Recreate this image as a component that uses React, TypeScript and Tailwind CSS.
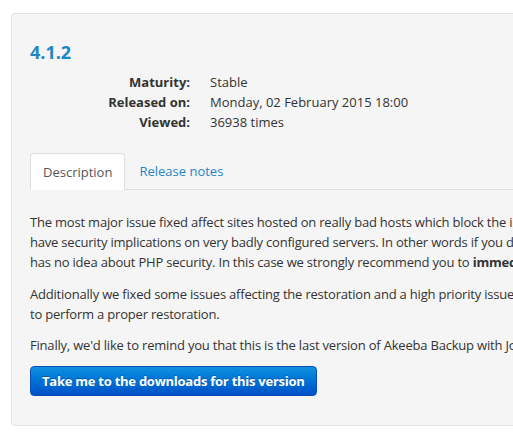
export default function App() {
  const font = { fontFamily: '"Open Sans", "Noto Sans", sans-serif' };
  return (
    <div className="w-[513px] h-[435px] overflow-hidden bg-white text-[#333] text-[13px] leading-[20px]" style={font}>
      <div className="ml-[11px] mt-[13px] w-[700px] h-[413px] bg-[#f5f5f5] border border-[#e3e3e3] rounded-[4px] pl-[18px] pt-[28px]">
        <h3 className="text-[18px] leading-[20px] font-bold text-[#1f86c8]">4.1.2</h3>
        <div className="mt-[10px] grid grid-cols-[160px_1fr] gap-x-[20px]">
          <div className="text-right font-bold">Maturity:</div>
          <div>Stable</div>
          <div className="text-right font-bold">Released on:</div>
          <div>Monday, 02 February 2015 18:00</div>
          <div className="text-right font-bold">Viewed:</div>
          <div>36938 times</div>
        </div>
        <div className="mt-[21px] flex border-b border-[#ddd] h-[37px]">
          <div className="px-3 py-2 bg-white border border-[#ddd] border-b-0 rounded-t-[4px] mr-[2px] h-[37px] text-[#555]">Description</div>
          <div className="px-3 py-2 text-[#1f86c8]">Release notes</div>
        </div>
        <div className="mt-[22px] whitespace-nowrap tracking-[-0.2px]">
          <p>The most major issue fixed affect sites hosted on really bad hosts which block the index.php file from running.</p>
          <p>have security implications on very badly configured servers. In other words if you don't know what this means</p>
          <p>has no idea about PHP security. In this case we strongly recommend you to <b>immediately</b> upgrade.</p>
          <p className="mt-[12px]">Additionally we fixed some issues affecting the restoration and a high priority issue which</p>
          <p>to perform a proper restoration.</p>
          <p className="mt-[11px]">Finally, we'd like to remind you that this is the last version of Akeeba Backup with Joomla! 2.5 support.</p>
        </div>
        <button className="mt-[11px] h-[30px] px-[11px] rounded-[4px] border border-[#0a4fb8] bg-gradient-to-b from-[#1290e0] to-[#0050c8] text-white font-bold text-[13px] tracking-[-0.25px] leading-[20px] [text-shadow:0_-1px_0_rgba(0,0,0,0.25)]">
          Take me to the downloads for this version
        </button>
      </div>
    </div>
  );
}
